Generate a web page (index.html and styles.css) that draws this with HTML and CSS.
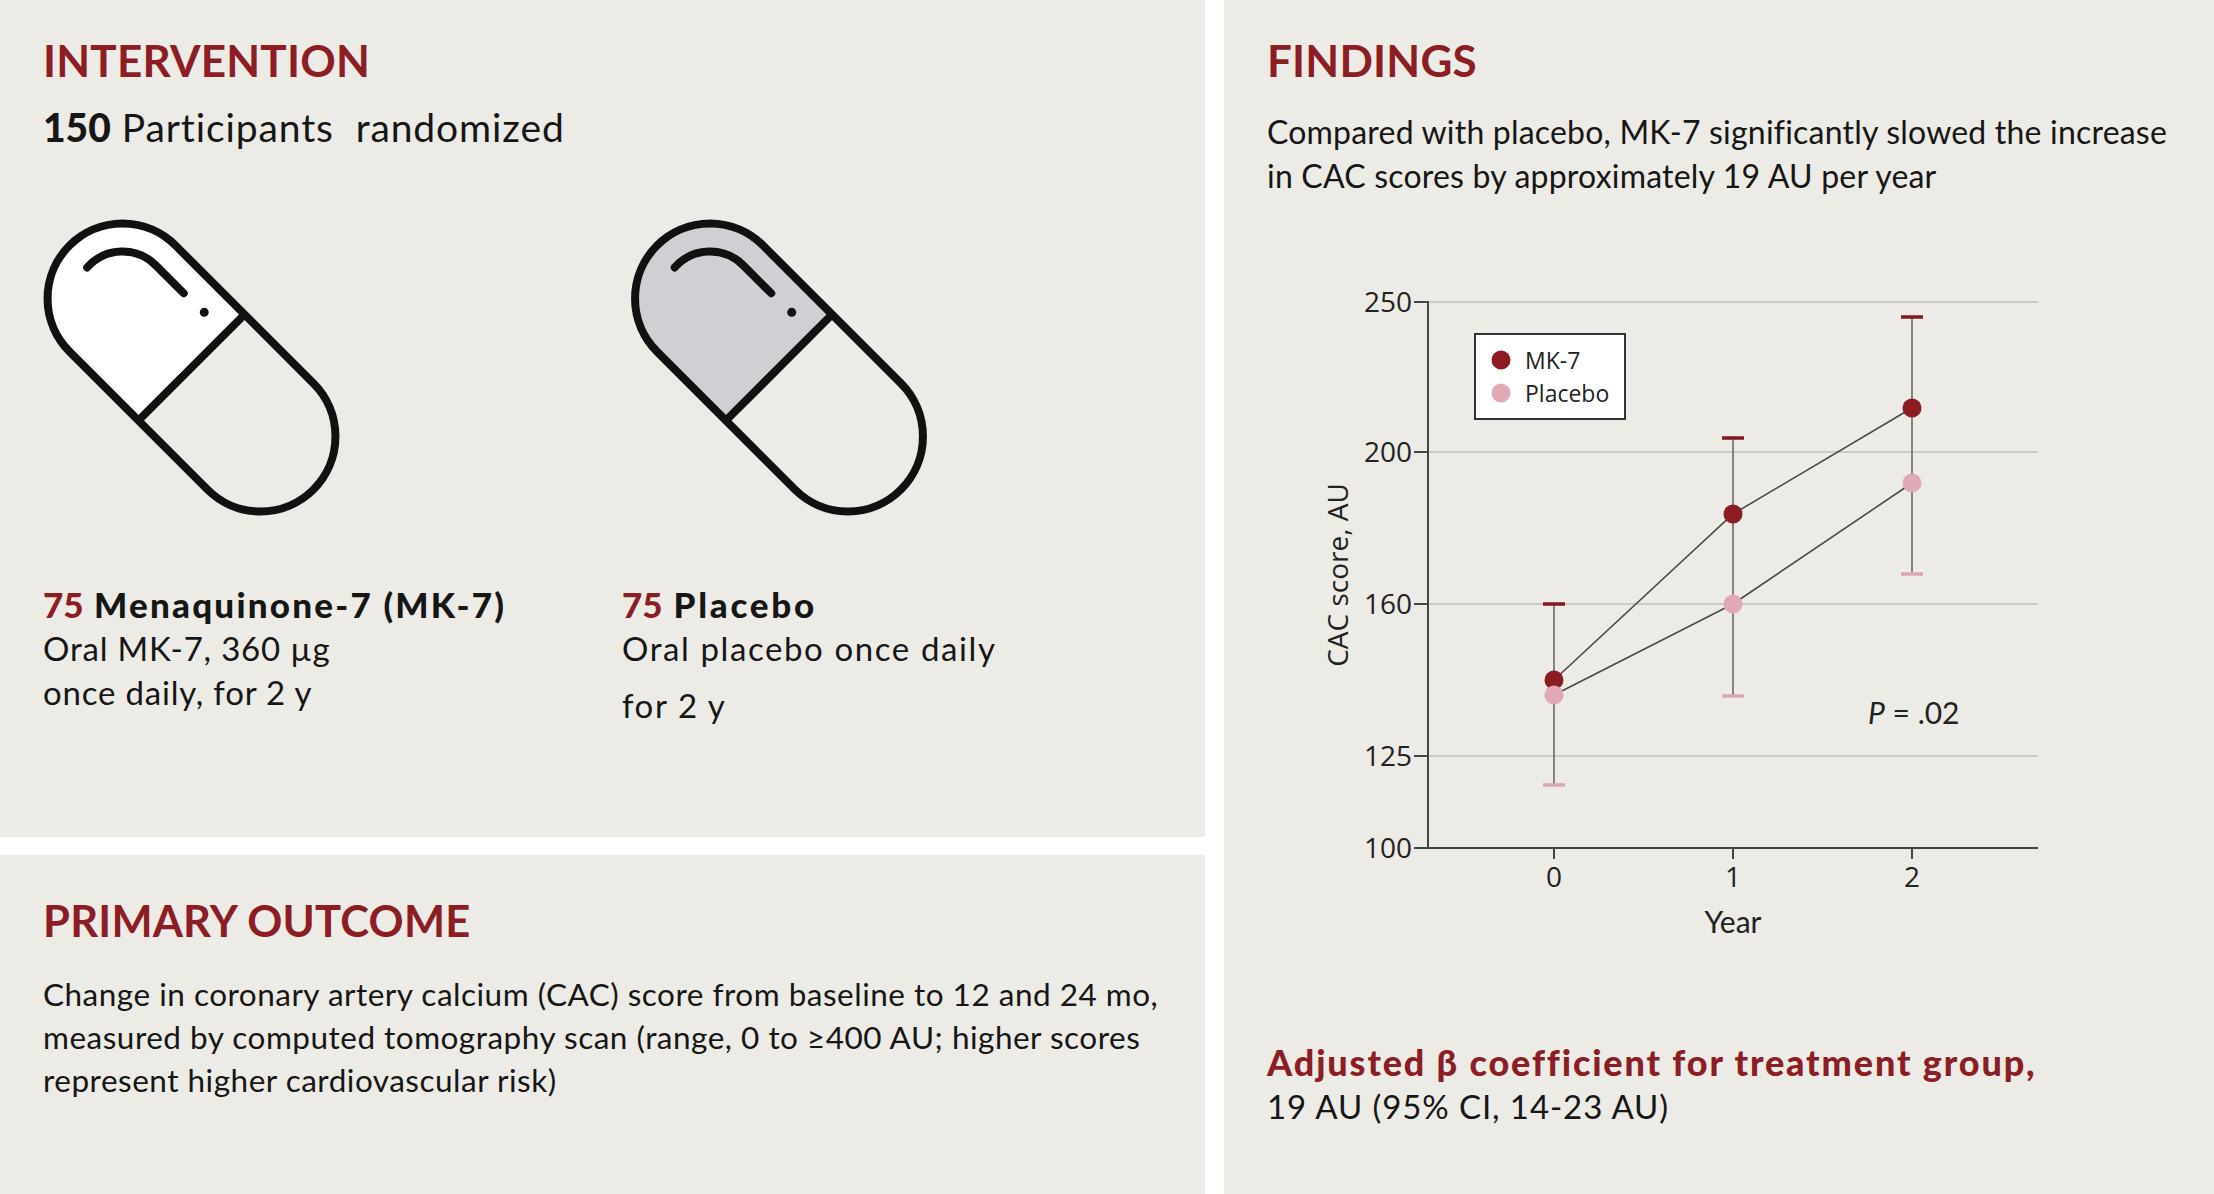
FILE: index.html
```html
<!DOCTYPE html>
<html lang="en">
<head>
<meta charset="utf-8">
<title>MK-7 trial visual abstract</title>
<link rel="stylesheet" href="styles.css">
</head>
<body>
<div class="page">
  <div class="left">
    <section class="panel intervention">
      <h2 class="heading">INTERVENTION</h2>
      <p class="lead"><b>150</b> Participants&nbsp; randomized</p>
      <div class="arms">
        <div class="arm arm-mk7">
          <svg class="pill" viewBox="0 0 320 300" width="320" height="300">
            <g transform="translate(148.5,149.5) rotate(45)">
              <path d="M0 -75 L-97.5 -75 A75 75 0 0 0 -97.5 75 L0 75 Z" fill="#ffffff"/>
              <rect x="-172.5" y="-75" width="345" height="150" rx="75" ry="75" fill="none" stroke="#111" stroke-width="8"/>
              <line x1="0" y1="-75" x2="0" y2="75" stroke="#111" stroke-width="8"/>
              <path d="M-144.5 3 A47 47 0 0 1 -97.5 -47 L-58 -47" fill="none" stroke="#111" stroke-width="8" stroke-linecap="round"/>
              <circle cx="-30" cy="-48" r="4.5" fill="#111"/>
            </g>
          </svg>
          <div class="arm-title"><span class="num">75</span> Menaquinone-7 (MK-7)</div>
          <div class="arm-desc">Oral MK-7, 360 µg<br>once daily, for 2 y</div>
        </div>
        <div class="arm arm-placebo">
          <svg class="pill" viewBox="0 0 320 300" width="320" height="300">
            <g transform="translate(157,149.5) rotate(45)">
              <path d="M0 -75 L-97.5 -75 A75 75 0 0 0 -97.5 75 L0 75 Z" fill="#cfd0d3"/>
              <rect x="-172.5" y="-75" width="345" height="150" rx="75" ry="75" fill="none" stroke="#111" stroke-width="8"/>
              <line x1="0" y1="-75" x2="0" y2="75" stroke="#111" stroke-width="8"/>
              <path d="M-144.5 3 A47 47 0 0 1 -97.5 -47 L-58 -47" fill="none" stroke="#111" stroke-width="8" stroke-linecap="round"/>
              <circle cx="-30" cy="-48" r="4.5" fill="#111"/>
            </g>
          </svg>
          <div class="arm-title"><span class="num">75</span> Placebo</div>
          <div class="arm-desc">Oral placebo once daily</div>
          <div class="arm-desc arm-desc-gap">for 2 y</div>
        </div>
      </div>
    </section>
    <section class="panel outcome">
      <h2 class="heading">PRIMARY OUTCOME</h2>
      <p class="body-text">Change in coronary artery calcium (CAC) score from baseline to 12 and 24 mo,<br>measured by computed tomography scan (range, 0 to ≥400 AU; higher scores<br>represent higher cardiovascular risk)</p>
    </section>
  </div>
  <section class="panel findings">
    <h2 class="heading">FINDINGS</h2>
    <p class="body-text findings-text">Compared with placebo, MK-7 significantly slowed the increase<br>in CAC scores by approximately 19 AU per year</p>
    <svg class="chart" viewBox="0 0 760 690" width="760" height="690">
      <g class="grid" stroke="#cbcac3" stroke-width="2">
        <line x1="128" y1="32" x2="738" y2="32"/>
        <line x1="128" y1="182" x2="738" y2="182"/>
        <line x1="128" y1="334" x2="738" y2="334"/>
        <line x1="128" y1="486" x2="738" y2="486"/>
      </g>
      <g class="axes" stroke="#444" stroke-width="2">
        <line x1="128" y1="31" x2="128" y2="579"/>
        <line x1="127" y1="578" x2="738" y2="578"/>
        <line x1="114" y1="32" x2="128" y2="32"/>
        <line x1="114" y1="182" x2="128" y2="182"/>
        <line x1="114" y1="334" x2="128" y2="334"/>
        <line x1="114" y1="486" x2="128" y2="486"/>
        <line x1="114" y1="578" x2="128" y2="578"/>
        <line x1="254" y1="578" x2="254" y2="589"/>
        <line x1="433" y1="578" x2="433" y2="589"/>
        <line x1="612" y1="578" x2="612" y2="589"/>
      </g>
      <g class="ticks" font-size="28" text-anchor="end" fill="#222">
        <text x="112" y="42">250</text>
        <text x="112" y="192">200</text>
        <text x="112" y="344">160</text>
        <text x="112" y="496">125</text>
        <text x="112" y="588">100</text>
      </g>
      <g class="ticks" font-size="28" text-anchor="middle" fill="#222">
        <text x="254" y="617">0</text>
        <text x="433" y="617">1</text>
        <text x="612" y="617">2</text>
      </g>
      <text class="axis-title" x="433" y="663" text-anchor="middle">Year</text>
      <text class="axis-title-y" x="48" y="305" text-anchor="middle" transform="rotate(-90 48 305)">CAC score, AU</text>
      <g class="errbars" stroke="#6a6a6a" stroke-width="1.6">
        <line x1="254" y1="334" x2="254" y2="515"/>
        <line x1="433" y1="168" x2="433" y2="426"/>
        <line x1="612" y1="47" x2="612" y2="304"/>
      </g>
      <g stroke="#7e1a20" stroke-width="3.5">
        <line x1="243" y1="334" x2="265" y2="334"/>
        <line x1="422" y1="168" x2="444" y2="168"/>
        <line x1="601" y1="47" x2="623" y2="47"/>
      </g>
      <g stroke="#d9a9b2" stroke-width="3.5">
        <line x1="243" y1="515" x2="265" y2="515"/>
        <line x1="422" y1="426" x2="444" y2="426"/>
        <line x1="601" y1="304" x2="623" y2="304"/>
      </g>
      <polyline points="254,410 433,244 612,138" fill="none" stroke="#4a4a4a" stroke-width="1.6"/>
      <polyline points="254,425 433,334 612,213" fill="none" stroke="#4a4a4a" stroke-width="1.6"/>
      <g fill="#8a1c22">
        <circle cx="254" cy="410" r="9.5"/>
        <circle cx="433" cy="244" r="9.5"/>
        <circle cx="612" cy="138" r="9.5"/>
      </g>
      <g fill="#dfaab5">
        <circle cx="254" cy="425" r="9.5"/>
        <circle cx="433" cy="334" r="9.5"/>
        <circle cx="612" cy="213" r="9.5"/>
      </g>
      <rect x="175" y="64" width="150" height="85" fill="#ffffff" stroke="#333" stroke-width="2"/>
      <circle cx="201" cy="90" r="9.5" fill="#8a1c22"/>
      <circle cx="201" cy="123" r="9.5" fill="#dfaab5"/>
      <g class="legend" font-size="23" fill="#222">
        <text x="225" y="99">MK-7</text>
        <text x="225" y="132">Placebo</text>
      </g>
      <text class="pval" x="568" y="454"><tspan font-style="italic">P</tspan> = .02</text>
    </svg>
    <div class="beta">
      <div class="beta-title">Adjusted β coefficient for treatment group,</div>
      <div class="beta-value">19 AU (95% CI, 14-23 AU)</div>
    </div>
  </section>
</div>
</body>
</html>
```

FILE: styles.css
```css
* {
  box-sizing: border-box;
}

html,
body {
  margin: 0;
  padding: 0;
  background: #ffffff;
}

body {
  font-family: Lato, "Open Sans", "Liberation Sans", sans-serif;
  color: #161616;
}

.page {
  width: 2214px;
  height: 1194px;
  display: grid;
  grid-template-columns: 1205px 990px;
  column-gap: 19px;
}

.left {
  display: flex;
  flex-direction: column;
  gap: 18px;
}

.panel {
  background: #ecebe5;
  padding: 34px 43px 0 43px;
}

.intervention {
  height: 837px;
}

.outcome {
  flex: 1;
  padding-top: 40px;
}

.heading {
  margin: 0;
  font-size: 44px;
  line-height: 52px;
  font-weight: 700;
  color: #8c1d25;
  letter-spacing: 0.2px;
}

.outcome .heading {
  font-size: 43.5px;
  line-height: 50px;
}

.lead {
  margin: 17px 0 0 0;
  font-size: 39px;
  line-height: 48px;
  letter-spacing: 0.9px;
  white-space: nowrap;
}

.lead b {
  font-weight: 900;
  letter-spacing: 0;
}

.arms {
  display: flex;
  margin-top: 67px;
}

.arm-mk7 {
  width: 579px;
}

.pill {
  display: block;
  overflow: visible;
}

.arm-title {
  margin-top: 64px;
  font-size: 35px;
  line-height: 44px;
  font-weight: 900;
  letter-spacing: 2.2px;
  white-space: nowrap;
}

.arm-placebo .arm-title {
  letter-spacing: 2.7px;
}

.num {
  color: #8c1d25;
  letter-spacing: 0;
}

.arm-desc {
  font-size: 33px;
  line-height: 44px;
  letter-spacing: 0.8px;
  white-space: nowrap;
}

.arm-placebo .arm-desc {
  letter-spacing: 1.6px;
}

.arm-desc-gap {
  margin-top: 13px;
}

.body-text {
  margin: 28px 0 0 0;
  font-size: 31.5px;
  line-height: 43px;
  letter-spacing: 0.5px;
  white-space: nowrap;
}

.findings-text {
  margin-top: 24px;
  font-size: 32px;
  line-height: 44px;
  letter-spacing: 0.2px;
}

.chart {
  display: block;
  margin: 72px 0 0 33px;
  font-family: "Open Sans", "Noto Sans", sans-serif;
}

.axis-title {
  font-family: Lato, "Open Sans", sans-serif;
  font-size: 30px;
  fill: #222;
}

.axis-title-y {
  font-family: "Open Sans", "Noto Sans", sans-serif;
  font-size: 28px;
  fill: #222;
}

.pval {
  font-family: Lato, "Open Sans", sans-serif;
  font-size: 30px;
  fill: #222;
}

.beta {
  margin-top: 80px;
}

.beta-title {
  font-size: 36px;
  line-height: 44px;
  font-weight: 900;
  letter-spacing: 1.85px;
  color: #8c1d25;
  white-space: nowrap;
}

.beta-value {
  font-size: 33px;
  line-height: 44px;
  letter-spacing: 0.9px;
  white-space: nowrap;
}
```
